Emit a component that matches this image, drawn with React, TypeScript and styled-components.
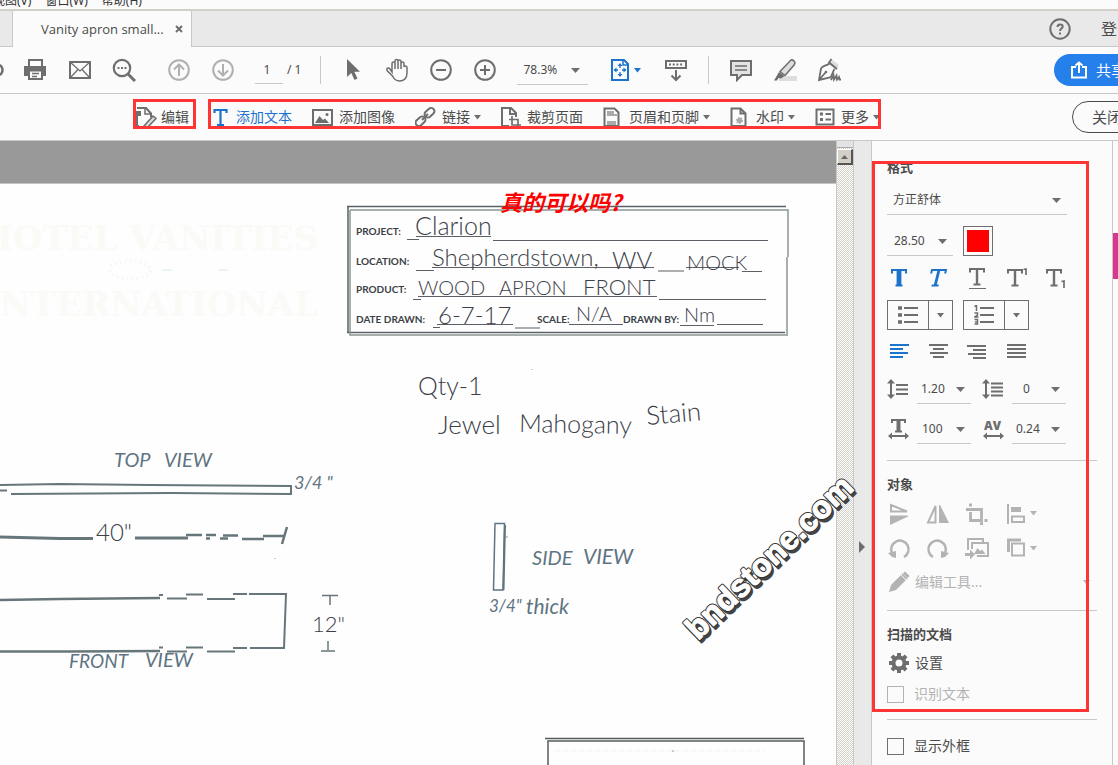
import React from "react";
import styled, { createGlobalStyle } from "styled-components";

const color = {
  ink: "#6e6e6e",
  text: "#4b4b4b",
  blue: "#1b73cc",
  muted: "#b3b3b3",
  line: "#c8c8c8",
  surface: "#fbfbfb",
  shade: "#e9e9e9",
  mark: "#ff3535",
  pencil: "#5f7482",
  pen: "#3c4048",
};

const GlobalStyle = createGlobalStyle`
  *, *::before, *::after { box-sizing: border-box; }
  body {
    margin: 0;
    overflow: hidden;
    background: ${color.surface};
    color: ${color.text};
    font-family: "Noto Sans", "Noto Sans CJK SC", sans-serif;
    font-size: 14px;
    line-height: 20px;
  }
  button, input, select { font: inherit; color: inherit; }
  button { padding: 0; border: 0; background: none; }
  svg { display: block; flex: none; }
`;

const Window = styled.div`
  display: flex;
  flex-direction: column;
  height: 100vh;
  overflow: hidden;
`;

/* ---------- menu and tabs ---------- */

const MenuBar = styled.nav`
  display: flex;
  flex: none;
  align-items: flex-end;
  gap: 14px;
  height: 11px;
  padding-bottom: 1px;
  border-bottom: 2px solid #d0d0c8;
  overflow: hidden;
  white-space: nowrap;
`;

const MenuItem = styled.button<{ $cut?: boolean }>`
  flex: none;
  margin-left: ${(p) => (p.$cut ? "-7px" : "0")};
  font-size: 12px;
  line-height: 14px;
  color: #333;
`;

const TabBar = styled.div`
  display: flex;
  flex: none;
  height: 36px;
  background: ${color.shade};
  border-bottom: 1px solid ${color.line};
`;

const Tab = styled.div`
  display: flex;
  align-items: center;
  gap: 11px;
  height: 36px;
  margin-left: 12px;
  padding: 0 8px 0 28px;
  border: solid ${color.line};
  border-width: 0 1px;
  background: ${color.surface};
  font-family: "Open Sans", sans-serif;
  font-size: 13px;
  white-space: nowrap;
`;

const TabActions = styled.div`
  display: flex;
  align-items: center;
  gap: 29px;
  width: 70px;
  margin-left: auto;
  overflow: hidden;
  white-space: nowrap;
`;

const TextButton = styled.button`
  flex: none;
  font-size: 16px;
`;

/* ---------- toolbars ---------- */

const Toolbar = styled.div`
  display: flex;
  flex: none;
  align-items: center;
  height: 47px;
  border-bottom: 1px solid ${color.line};
  white-space: nowrap;
`;

const ToolCell = styled.button<{ $before?: number }>`
  display: flex;
  flex: none;
  align-items: center;
  justify-content: center;
  gap: 4px;
  width: 44px;
  height: 32px;
  margin-left: ${(p) => p.$before ?? 0}px;
`;

const CutCell = styled(ToolCell)`
  justify-content: flex-start;
  width: 13px;
`;

const ToolDivider = styled.span<{ $before: number; $after: number }>`
  flex: none;
  width: 1px;
  height: 28px;
  margin: 0 ${(p) => p.$after}px 0 ${(p) => p.$before}px;
  background: ${color.line};
`;

const PageField = styled.label`
  display: flex;
  align-items: center;
  gap: 4px;
  margin-left: 10px;
  font-size: 12px;
`;

const PageInput = styled.input`
  width: 28px;
  height: 28px;
  padding: 0 4px 0 0;
  border: 0;
  border-bottom: 1px solid ${color.line};
  background: none;
  text-align: center;
`;

const ZoomSlot = styled.div`
  margin-left: 10px;
`;

const RightSlot = styled.div<{ $width: number }>`
  width: ${(p) => p.$width}px;
  margin-left: auto;
  overflow: hidden;
`;

const ShareButton = styled.button`
  display: flex;
  align-items: center;
  gap: 8px;
  width: 110px;
  height: 32px;
  padding-left: 16px;
  border-radius: 16px;
  background: #2680eb;
  color: #fff;
  font-size: 15px;
`;

const CloseButton = styled.button`
  width: 100px;
  height: 32px;
  padding-left: 19px;
  border: 1px solid #4b4b4b;
  border-radius: 16px;
  font-size: 15px;
  text-align: left;
`;

const Marked = styled.div<{ $before?: number; $gap?: number }>`
  position: relative;
  display: flex;
  align-items: center;
  gap: ${(p) => p.$gap ?? 0}px;
  height: 22px;
  margin-left: ${(p) => p.$before ?? 0}px;
`;

const MarkBox = styled.div<{ $inset: string; $height?: number }>`
  position: absolute;
  inset: ${(p) => p.$inset};
  height: ${(p) => (p.$height ? `${p.$height}px` : "auto")};
  border: 3px solid ${color.mark};
  pointer-events: none;
`;

const EditTool = styled.button<{ $slot?: number; $active?: boolean }>`
  display: grid;
  grid-template-columns: ${(p) => p.$slot ?? 26}px auto auto;
  flex: none;
  align-items: center;
  color: ${(p) => (p.$active ? color.blue : color.text)};
`;

const CaretSvg = styled.svg`
  margin-left: 4px;
`;

/* ---------- workspace ---------- */

const Workspace = styled.main`
  position: relative;
  display: flex;
  flex: 1;
  min-height: 0;
`;

const Viewer = styled.section`
  flex: 1;
  min-width: 0;
  overflow: hidden;
  padding-top: 42px;
  background: #999;
`;

const Sheet = styled.div`
  min-height: 100%;
  border-top: 1px solid #c4c4c4;
  background: #fefefe;
`;

const ScrollBar = styled.div`
  display: flex;
  flex: none;
  flex-direction: column;
  gap: 1px;
  width: 18px;
  border: solid ${color.line};
  border-width: 0 1px;
  background: repeating-conic-gradient(#d4d0c8 0 25%, #fff 0 50%) 0 0 / 2px 2px;
`;

const ScrollSplit = styled.div`
  height: 7px;
  border-bottom: 1px solid #aaa;
  background: #e3e3e3;
`;

const ScrollButton = styled.button`
  display: flex;
  align-items: center;
  justify-content: center;
  height: 16px;
  border: solid;
  border-width: 1px 2px 2px 1px;
  border-color: #fff #555 #555 #fff;
  background: #d4d0c8;
`;

const CollapseStrip = styled.button`
  display: flex;
  flex: none;
  align-items: center;
  width: 18px;
  padding: 187px 0 0 5px;
  border-right: 1px solid ${color.line};
  background: ${color.shade};
`;

const Watermark = styled.svg`
  position: absolute;
  top: 320px;
  right: 250px;
  pointer-events: none;
`;

/* ---------- format panel ---------- */

const Panel = styled.aside`
  position: relative;
  flex: none;
  width: 241px;
  padding: 0 15px;
  border-right: 1px solid ${color.line};
`;

const Gutter = styled.div`
  flex: none;
  width: 5px;
  padding-top: 92px;
`;

const GutterTab = styled.div`
  height: 46px;
  background: #d83790;
`;

const Section = styled.section<{ $top: number; $bottom: number }>`
  padding: ${(p) => p.$top}px 0 ${(p) => p.$bottom}px;
  & + & { border-top: 1px solid ${color.line}; }
`;

const Heading = styled.h2`
  margin: 0;
  font-size: 13px;
  font-weight: 700;
  line-height: 20px;
`;

const Row = styled.div<{ $height: number; $gap?: number }>`
  display: flex;
  align-items: center;
  gap: ${(p) => p.$gap ?? 0}px;
  height: ${(p) => p.$height}px;
`;

const SelectBox = styled.span<{ $width: number }>`
  position: relative;
  display: block;
  flex: none;
  width: ${(p) => p.$width}px;
`;

const SelectField = styled.select<{ $pad: number }>`
  display: block;
  width: 100%;
  height: 30px;
  padding: 0 0 0 ${(p) => p.$pad}px;
  border: 0;
  border-bottom: 1px solid ${color.line};
  border-radius: 0;
  background: none;
  appearance: none;
  font-size: 12px;
`;

const SelectCaret = styled.svg<{ $right: number }>`
  position: absolute;
  top: 13px;
  right: ${(p) => p.$right}px;
  pointer-events: none;
`;

const Swatch = styled.button`
  width: 30px;
  height: 30px;
  margin-left: 10px;
  padding: 3px;
  border: 1px solid ${color.ink};
  background: #f00 content-box;
`;

const IconButton = styled.button`
  display: flex;
  align-items: center;
  gap: 4px;
  width: 39px;
  height: 26px;
`;

const SplitButton = styled.div`
  display: grid;
  grid-template-columns: 40px 1fr;
  width: 66px;
  height: 30px;
  border: 1px solid ${color.ink};
`;

const SplitPart = styled.button`
  display: flex;
  align-items: center;
  justify-content: center;
  & + & { border-left: 1px solid ${color.ink}; }
`;

const Metric = styled.div`
  display: flex;
  align-items: center;
  gap: 7px;
  width: 95px;
`;

const ActionButton = styled.button<{ $muted?: boolean }>`
  display: flex;
  align-items: center;
  gap: 5px;
  width: 100%;
  padding-right: 7px;
  color: ${(p) => (p.$muted ? color.muted : color.text)};
`;

const EndCaret = styled(CaretSvg)`
  margin-left: auto;
`;

const CheckRow = styled.label<{ $muted?: boolean }>`
  display: flex;
  align-items: center;
  gap: 10px;
  color: ${(p) => (p.$muted ? color.muted : color.text)};
`;

const CheckBox = styled.input`
  width: 17px;
  height: 17px;
  margin: 0;
  border: 1px solid ${color.ink};
  appearance: none;
  &:disabled { border-color: ${color.muted}; }
`;

/* ---------- icons ---------- */

type IconProps = { w?: number; h?: number; c?: string; children: React.ReactNode };

const Icon = ({ w = 24, h = 24, c = color.ink, children }: IconProps) => (
  <svg width={w} height={h} viewBox={`0 0 ${w} ${h}`} fill="none" stroke={c} strokeWidth={2} aria-hidden="true">
    {children}
  </svg>
);

const Triangle = ({ c }: { c: string }) => <path d="M0 0h7L3.500 4.500z" fill={c} />;

const Caret = ({ c = color.ink }: { c?: string }) => (
  <CaretSvg width="7" height="5" aria-hidden="true"><Triangle c={c} /></CaretSvg>
);

const BareCaret = ({ c = color.ink }: { c?: string }) => (
  <svg width="7" height="5" aria-hidden="true"><Triangle c={c} /></svg>
);

const PrintIcon = () => (
  <Icon>
    <path d="M6 8V2h13v6" />
    <path d="M1 8h22v10H1z" fill={color.ink} stroke="none" />
    <path d="M6 12.500h13V21H6z" fill={color.surface} />
    <path d="M9 15.500h7M9 18.500h5" strokeWidth="1.300" />
  </Icon>
);
const MailIcon = () => (
  <Icon>
    <path d="M2 4h20v16H2z" />
    <path d="M2 4l10 9L22 4M2 20l8-8.500M22 20l-8-8.500" strokeWidth="1.300" />
  </Icon>
);
const SearchIcon = () => (
  <Icon>
    <circle cx="10" cy="10" r="8.200" strokeWidth="2.200" />
    <path d="M16 16l7 7" strokeWidth="3" />
    <path d="M5.500 10h2M9 10h2M12.500 10h2" />
  </Icon>
);
const ArrowIcon = ({ down }: { down?: boolean }) => (
  <Icon c="#b0b0b0">
    <circle cx="12" cy="12" r="9.800" />
    <path d={down ? "M12 6v11M7 12.500l5 5 5-5" : "M12 18V7M7 11.500l5-5 5 5"} />
  </Icon>
);
const CursorIcon = () => (
  <Icon><path d="M6 1v18l4.300-4 3.200 7 3-1.400-3.200-6.800H19z" fill={color.ink} stroke="none" /></Icon>
);
const HandIcon = () => (
  <Icon>
    <path
      d="M7 14V5.500a1.500 1.500 0 013 0V11V3a1.500 1.500 0 013 0v8V3.500a1.500 1.500 0 013 0V11V5.500a1.500 1.500 0 013 0V9c.3-1.500 3-1.500 3 .5V15c0 5-3 8-7.500 8-4 0-5.500-2-7-5L2 12.500c-1-2 1.500-3.500 3-1.500z"
      strokeWidth="1.500"
    />
  </Icon>
);
const ZoomIcon = ({ plus }: { plus?: boolean }) => (
  <Icon>
    <circle cx="12" cy="12" r="9.800" />
    <path d={plus ? "M7 12h10M12 7v10" : "M7 12h10"} />
  </Icon>
);
const FitIcon = () => (
  <Icon w={20} c={color.blue}>
    <path d="M2 2h12l4 4v16H2z" />
    <path d="M13 2v5h5" strokeWidth="1.500" />
    <path d="M10 7v3M10 14v3M4.500 12H8M12 12h3.500" strokeWidth="1.300" />
    <path d="M10 5l2.500 3h-5zM10 19l2.500-3h-5zM3.500 12l3-2.500v5zM16.500 12l-3-2.500v5z" fill={color.blue} stroke="none" />
  </Icon>
);
const RulerIcon = () => (
  <Icon>
    <path d="M2 3h20v7H2z" />
    <path d="M5 6.500h14" strokeDasharray="2 1.700" strokeWidth="2" />
    <path d="M12 12v10M7.500 17.500l4.500 4.500 4.500-4.500" />
  </Icon>
);
const CommentIcon = () => (
  <Icon>
    <path d="M2 3h20v14h-9l-5 5v-5H2z" fill="#e3e3e3" />
    <path d="M6 8h12M6 12h12" strokeWidth="1.500" />
  </Icon>
);
const HighlightIcon = () => (
  <Icon>
    <path d="M6 18h18v5H6z" fill="#ddd" stroke="none" />
    <path d="M7 13.500L17.500 2.500c1.500-1.500 5.500.5 4 4L12 17.500z" fill="#ddd" strokeWidth="1.500" />
    <path d="M6 14l5.500 4L8 20.500 5.500 20 4 22.500H1z" fill={color.ink} stroke="none" />
  </Icon>
);
const PenIcon = () => (
  <Icon>
    <path d="M14 1l8 6-3 5-7-6z" fill="#ddd" stroke="none" />
    <path d="M14.500 1l-2.500 3.500 8 6.500M12.500 5.500C9 8 5 8 4 10.500L2 22l11-2.500c2-1 2-4.500 4.500-8.500M2 22l6.500-7.500" strokeWidth="1.800" />
    <circle cx="9" cy="14" r="1.300" fill={color.ink} stroke="none" />
    <path d="M14 22l2.500-5 .5 4.500 2.500-4 .5 4 2-2.500.5 2.500h1.500" strokeWidth="1.800" />
  </Icon>
);
const ShareIcon = () => (
  <Icon w={18} h={18} c="#fff">
    <path d="M6 6H2v10.500h14V6h-4M9 12V2M5.500 4.500L9 1.500l3.500 3" />
  </Icon>
);
const HelpIcon = () => (
  <Icon>
    <circle cx="12" cy="12" r="9.700" />
    <path d="M9.500 10c0-3.500 5.200-3.300 5.200-.5 0 2-2.700 2-2.700 4.500M12 15.500v2" strokeWidth="2" />
  </Icon>
);
const CrossIcon = () => (
  <Icon w={8} h={8}><path d="M1 1l6 6M7 1L1 7" /></Icon>
);

const EditPageIcon = () => (
  <Icon w={22} h={22}>
    <path d="M4 20H2V10M2 2h9l5 5.500v4" />
    <path d="M10 2v6h6" strokeWidth="1.500" />
    <path d="M0 5h6v5H0z" fill={color.ink} stroke="none" />
    <path d="M9 20l9-10 3 2.500L12 22z" fill="#ddd" strokeWidth="1.600" />
  </Icon>
);
const TextIcon = () => (
  <Icon w={16} h={20} c={color.blue}>
    <path d="M1.500 6V3h12v3M7.500 3v14.500M4 18h7" strokeWidth="2.200" />
  </Icon>
);
const PictureIcon = () => (
  <Icon w={22} h={20}>
    <path d="M1 3h19v15H1z" />
    <path d="M3 16l4.500-7 3.500 4 2-1.500 4 4.500z" fill={color.ink} stroke="none" />
    <circle cx="15" cy="7.500" r="1.500" fill={color.ink} stroke="none" />
  </Icon>
);
const LinkIcon = () => (
  <Icon w={22} h={22}>
    <rect x="9" y="3.500" width="11" height="6.500" rx="3.200" transform="rotate(-42 14.500 6.700)" />
    <rect x="0" y="12" width="11" height="6.500" rx="3.200" transform="rotate(-42 5.500 15.200)" />
    <path d="M7 14l6-6" />
  </Icon>
);
const CropPageIcon = () => (
  <Icon w={22} h={22}>
    <path d="M8 20H1V2h9l5 5v4M9 2v6h6" />
    <path d="M11 10v9h9M8 13.500h9V22" strokeWidth="1.700" />
  </Icon>
);
const HeaderIcon = () => (
  <Icon w={18} h={20}>
    <path d="M1.500 1.500h10l4 4V19h-14z" />
    <path d="M4 4h7v3h3v2H4zM4 14h9v4H4z" fill="#aaa" stroke="none" />
  </Icon>
);
const WatermarkIcon = () => (
  <Icon w={18} h={20}>
    <path d="M1.500 1.500h9l5 5V19h-14zM10.500 1.500v5h5" />
    <circle cx="9.500" cy="13.500" r="2.500" fill="#aaa" stroke="#aaa" strokeDasharray="1.500 1" />
  </Icon>
);
const MoreIcon = () => (
  <Icon w={20} h={18}>
    <path d="M1.500 1.500h17v15h-17z" />
    <path d="M5 6h3M5 11.500h3" strokeWidth="3" />
    <path d="M10.500 6H16M10.500 11.500H16" />
  </Icon>
);

const SerifT = ({ c, weight = 1.8, x = 0 }: { c: string; weight?: number; x?: number }) => (
  <g stroke={c} transform={`translate(${x} 0)`}>
    <path d="M2 7.500V4h14v3.500" strokeWidth="2" />
    <path d="M9 4v15" strokeWidth={weight * 1.6} />
    <path d="M5.500 19.500h7" strokeWidth="2" />
  </g>
);
const BoldIcon = () => <Icon w={26} c={color.blue}><SerifT c={color.blue} weight={3} x={3} /></Icon>;
const ItalicIcon = () => (
  <Icon w={26} c={color.blue}>
    <g transform="skewX(-14) translate(5 0)"><SerifT c={color.blue} weight={1.8} /></g>
  </Icon>
);
const UnderlineIcon = () => (
  <Icon w={26}><g transform="translate(3 -1)"><SerifT c={color.ink} weight={1.5} /></g><path d="M4 22.500h17" strokeWidth="1" /></Icon>
);
const SuperIcon = () => <Icon w={26}><SerifT c={color.ink} weight={1.5} x={2} /><path d="M19.500 3.500L22 3v6" strokeWidth="1.700" /></Icon>;
const SubIcon = () => <Icon w={26}><SerifT c={color.ink} weight={1.5} x={2} /><path d="M18.500 15.500L21 15v7" strokeWidth="1.700" /></Icon>;

const BulletsIcon = () => (
  <Icon w={20} h={20}>
    <path d="M6 3h14M6 10h14M6 17h14" />
    <path d="M0 3h4M0 10h4M0 17h4" strokeWidth="3.500" />
  </Icon>
);
const NumbersIcon = () => (
  <Icon w={20} h={20}>
    <path d="M6 3h14M6 10h14M6 17h14" />
    <path d="M.5 1.500L2.500.5V6M.5 8h3v2l-3 2h4M.5 14.500h3v4.500h-3M1 17h3" strokeWidth="1.500" />
  </Icon>
);

const AlignIcon = ({ d, c = color.ink }: { d: string; c?: string }) => (
  <Icon w={24} h={18} c={c}><path d={d} /></Icon>
);

const UpDown = () => (
  <>
    <path d="M4 4v14" strokeWidth="2" />
    <path d="M4 1l4 4.500H0zM4 21l4-4.500H0z" fill={color.ink} stroke="none" />
  </>
);
const LineIcon = () => <Icon w={23} h={22}><UpDown /><path d="M9 7h12M9 11.500h12M9 16h12" /></Icon>;
const ParagraphIcon = () => <Icon w={23} h={22}><UpDown /><path d="M9 5.500h12M9 9.500h12M9 13.500h12M9 17.500h12" /></Icon>;
const LeftRight = () => (
  <>
    <path d="M4 19h15" />
    <path d="M1 19l4-3.500v7zM22 19l-4-3.500v7z" fill={color.ink} stroke="none" />
  </>
);
const ScaleIcon = () => (
  <Icon w={23}><path d="M5 6V3h13v3M8 14.500h7" /><path d="M11.500 3v11" strokeWidth="4" /><LeftRight /></Icon>
);
const KerningIcon = () => (
  <Icon w={23}>
    <text x="2" y="13" fontFamily="Open Sans, sans-serif" fontWeight="800" fontSize="12" fill={color.ink} stroke="none">AV</text>
    <LeftRight />
  </Icon>
);

const m = color.muted;
const FlipVIcon = () => (
  <Icon w={24} c={m}><path d="M4 3L20 9.500H4z" strokeWidth="2" /><path d="M3 13.500h18v1L3 23z" fill={m} stroke="none" /></Icon>
);
const FlipHIcon = () => (
  <Icon w={24} c={m}><path d="M9.500 4v16.500H2z" strokeWidth="2" /><path d="M13 3h1l9 18H13z" fill={m} stroke="none" /></Icon>
);
const CropIcon = () => (
  <Icon w={24} c={m}><path d="M1 7.500h15.500V23M5.500 10v8.500H15" strokeWidth="2.800" /><path d="M4 3h3M19.500 18.500h3" strokeWidth="3" /></Icon>
);
const AlignObjIcon = () => (
  <Icon w={22} c={m}><path d="M4 2v20M8 14.500h12v5.500H8z" /><path d="M7 5h10v5H7z" fill={m} stroke="none" /></Icon>
);
const RotateIcon = ({ right }: { right?: boolean }) => (
  <Icon w={24} c={m}>
    <g transform={right ? "translate(24 0) scale(-1 1)" : undefined}>
      <path d="M5 17a8.700 8.700 0 1112 4" strokeWidth="2.500" />
      <path d="M1 17l8-2v7l-4-1z" fill={m} stroke="none" />
    </g>
  </Icon>
);
const ReplaceIcon = () => (
  <Icon w={24} c={m}>
    <path d="M3 14V3h15v3M7 13V7h16v13H12" />
    <path d="M9 18l3.500-6 2.500 3 2-1.500 3.500 4.500z" fill={m} stroke="none" />
    <path d="M0 18.500h6" strokeWidth="3" /><path d="M5 13.500l5 5-5 5z" fill={m} stroke="none" />
  </Icon>
);
const ArrangeIcon = () => (
  <Icon w={22} c={m}><path d="M8 7.500h12v12H8z" /><path d="M4.500 16V4H17" strokeWidth="3" /></Icon>
);
const PencilIcon = () => (
  <Icon w={23} c={m}>
    <path d="M2 22l2-7L15.500 3.500l5 5L9 20z" fill={m} stroke="none" /><path d="M17 2.500l4.500 4.500" strokeWidth="3" />
    <path d="M14 5l5 5" stroke={color.surface} strokeWidth="1" />
  </Icon>
);
const GearIcon = () => (
  <Icon w={23}>
    <circle cx="12" cy="12" r="5.500" strokeWidth="4" />
    {[0, 45, 90, 135].map((a) => (
      <path key={a} d="M12 2v4M12 18v4" strokeWidth="4" transform={`rotate(${a} 12 12)`} />
    ))}
  </Icon>
);

/* ---------- scanned sheet ---------- */

const label = { fontFamily: "Lato, sans-serif", fontWeight: 700, fontSize: 10, fill: "#3b4147" };
const pen = { fontFamily: "Lato, sans-serif", fontWeight: 300, fill: color.pen };
const pencil = { fontFamily: "Lato, sans-serif", fontStyle: "italic", fontWeight: 400, fill: color.pencil };
const letterhead = {
  fontFamily: "DejaVu Serif, serif", fontWeight: 700, fontSize: 34, fill: "#fafaf7", textAnchor: "end" as const,
};

const ScannedSheet = () => (
  <svg width="836" height="581" viewBox="0 184 836 581" fill="none" role="img" aria-label="Vanity apron drawing">
    <text x="318" y="250" {...letterhead}>HOTEL VANITIES</text>
    <text x="318" y="316" {...letterhead}>INTERNATIONAL</text>
    <ellipse cx="130" cy="270" rx="20" ry="9" stroke="#f5f9f7" strokeWidth="4" strokeDasharray="2 3" />
    <path d="M162 270h10M219 270h9" stroke="#d5ebe5" />

    <g stroke="#5b6166">
      <path d="M347 206.500H786M348 206v127M347 332.500H785" strokeWidth="1.500" />
      <path d="M350 210H788V257M787 257V336M350 210V335H786" stroke="#8b9692" strokeWidth="1.500" />
      <path d="M407 239.500h12M416 236.500h75M493 240.500H768" />
      <path d="M416 270.500h18M432 267.500h222M658 271h26M686 267.500h53M742 271.500h20" />
      <path d="M413 299.500h8M418 296.500h239M659 299.500H766" />
      <path d="M433 327.500h7M437 324.500h76M515 328h25M569 324.500h54M680 325.500h34M717 324.500h46" />
    </g>
    <g {...label}>
      <text x="356" y="235">PROJECT:</text>
      <text x="356" y="265">LOCATION:</text>
      <text x="356" y="293">PRODUCT:</text>
      <text x="356" y="323">DATE DRAWN:</text>
      <text x="537" y="323">SCALE:</text>
      <text x="623" y="323">DRAWN BY:</text>
    </g>
    <g {...pen}>
      <text x="415" y="235" fontSize="25">Clarion</text>
      <text x="432" y="266" fontSize="24">Shepherdstown,</text>
      <text x="612" y="269" fontSize="24">WV</text>
      <text x="687" y="270" fontSize="20">MOCK</text>
      <text x="418" y="295" fontSize="20">WOOD</text>
      <text x="499" y="295" fontSize="20">APRON</text>
      <text x="583" y="295" fontSize="22">FRONT</text>
      <text x="438" y="324" fontSize="24">6-7-17</text>
      <text x="576" y="321" fontSize="20">N/A</text>
      <text x="684" y="322" fontSize="20">Nm</text>
      <text x="418" y="395" fontSize="25">Qty-1</text>
      <text x="438" y="434" fontSize="26">Jewel</text>
      <text x="519" y="432" fontSize="25" transform="rotate(1 519 432)">Mahogany</text>
      <text x="647" y="425" fontSize="26" transform="rotate(-5 647 425)">Stain</text>
      <text x="96" y="541" fontSize="24">40"</text>
      <text x="312" y="632" fontSize="22">12"</text>
    </g>
    <text
      x="500" y="211" fontFamily="Noto Sans CJK SC, sans-serif" fontSize="22" fontWeight="700" fontStyle="italic" fill="#f00"
    >
      真的可以吗?
    </text>

    <g {...pencil}>
      <text x="114" y="467" fontSize="20">TOP</text>
      <text x="164" y="467" fontSize="20">VIEW</text>
      <text x="294" y="489" fontSize="18">3/4 "</text>
      <text x="69" y="668" fontSize="19">FRONT</text>
      <text x="145" y="667" fontSize="20">VIEW</text>
      <text x="532" y="565" fontSize="20">SIDE</text>
      <text x="583" y="564" fontSize="21">VIEW</text>
      <text x="489" y="612" fontSize="17">3/4"</text>
      <text x="526" y="614" fontSize="21">thick</text>
    </g>

    <g stroke="#67767a" strokeWidth="2">
      <path d="M0 485l60-1 90 1 141 1v8l-120-1-160 1" />
      <path d="M0 490.500h7" />
      <path d="M0 537l60 1.500h33M135 538h53" strokeWidth="3" />
      <path d="M186 535h16M206 535h10M206 538.500h4M220 538.500h8M223 535.500h15M242 539h22M263 536h21M287 527l-5 17" strokeWidth="2.500" />
      <path d="M0 600l60-1 100-1M0 651.500h70l90-.5" strokeWidth="2.500" />
      <path d="M159 595h4M167 598.500h20M186 594.500h17M207 599h28M233 594h14M249 594h37l-2 54h-34" />
      <path d="M159 647.500h4M167 651.500h20M186 647.500h17M207 651.500h28M233 648h14" />
      <path d="M322 595.500h16M330 596v9M328 641v9M321 651h14" strokeWidth="1.500" />
      <path d="M495 523.500h9.500L503 590h-9.500z" stroke={color.pencil} strokeWidth="1.500" />
      <path d="M505 525l-1.500 65" stroke={color.pencil} />
    </g>
    <path d="M545 738.500h259M548 765v-24h256v24" stroke="#555c5c" strokeWidth="1.500" />
    <path d="M555 751h210" stroke="#f9f9f7" strokeWidth="3" strokeDasharray="5 3" />
    <path d="M507 536v2M532 369v1M275 558v1M672 751h2" stroke="#999" />
  </svg>
);

/* ---------- page ---------- */

type SelectProps = { name: string; value: string; width: number; pad: number; right?: number };

const PanelSelect = ({ name, value, width, pad, right = 6 }: SelectProps) => (
  <SelectBox $width={width}>
    <SelectField aria-label={name} $pad={pad} defaultValue={value}>
      <option>{value}</option>
    </SelectField>
    <SelectCaret $right={right} width="9" height="5" viewBox="-1 0 9 5" aria-hidden="true">
      <path d="M-1 0h9L3.500 5z" fill={color.ink} />
    </SelectCaret>
  </SelectBox>
);

const insertTools = [
  { name: "添加文本", icon: <TextIcon />, slot: 23, active: true },
  { name: "添加图像", icon: <PictureIcon />, slot: 27 },
  { name: "链接", icon: <LinkIcon />, slot: 27, menu: true },
  { name: "裁剪页面", icon: <CropPageIcon /> },
  { name: "页眉和页脚", icon: <HeaderIcon />, menu: true },
  { name: "水印", icon: <WatermarkIcon />, menu: true },
  { name: "更多", icon: <MoreIcon />, menu: true },
];

export default function App() {
  return (
    <>
      <GlobalStyle />
      <Window>
        <MenuBar>
          <MenuItem $cut>视图(V)</MenuItem>
          <MenuItem>窗口(W)</MenuItem>
          <MenuItem>帮助(H)</MenuItem>
        </MenuBar>

        <TabBar>
          <Tab>
            Vanity apron small...
            <button aria-label="关闭标签"><CrossIcon /></button>
          </Tab>
          <TabActions>
            <button aria-label="帮助"><HelpIcon /></button>
            <TextButton>登录</TextButton>
          </TabActions>
        </TabBar>

        <Toolbar>
          <CutCell aria-label="保存">
            <Icon w={4} h={14}><path d="M-2 2c6 0 6 10 0 10" strokeWidth="2.500" /></Icon>
          </CutCell>
          <ToolCell aria-label="打印"><PrintIcon /></ToolCell>
          <ToolCell aria-label="邮件" $before={1}><MailIcon /></ToolCell>
          <ToolCell aria-label="搜索"><SearchIcon /></ToolCell>
          <ToolCell aria-label="上一页" $before={11}><ArrowIcon /></ToolCell>
          <ToolCell aria-label="下一页"><ArrowIcon down /></ToolCell>
          <PageField>
            <PageInput aria-label="页码" defaultValue="1" />
            / 1
          </PageField>
          <ToolDivider $before={19} $after={10} />
          <ToolCell aria-label="选择"><CursorIcon /></ToolCell>
          <ToolCell aria-label="抓手"><HandIcon /></ToolCell>
          <ToolCell aria-label="缩小"><ZoomIcon /></ToolCell>
          <ToolCell aria-label="放大"><ZoomIcon plus /></ToolCell>
          <ZoomSlot>
            <PanelSelect name="缩放" value="78.3%" width={71} pad={6} right={8} />
          </ZoomSlot>
          <ToolCell aria-label="适合页面" $before={15}><FitIcon /><BareCaret c={color.blue} /></ToolCell>
          <ToolCell aria-label="显示工具栏" $before={7}><RulerIcon /></ToolCell>
          <ToolDivider $before={10} $after={10} />
          <ToolCell aria-label="注释"><CommentIcon /></ToolCell>
          <ToolCell aria-label="高亮"><HighlightIcon /></ToolCell>
          <ToolCell aria-label="签名"><PenIcon /></ToolCell>
          <RightSlot $width={64}>
            <ShareButton><ShareIcon />共享</ShareButton>
          </RightSlot>
        </Toolbar>

        <Toolbar>
          <Marked $before={135}>
            <EditTool><EditPageIcon />编辑</EditTool>
            <MarkBox $inset="-7px -7px -1px -2px" />
          </Marked>
          <Marked $before={24} $gap={20}>
            {insertTools.map((t) => (
              <EditTool key={t.name} $slot={t.slot} $active={t.active}>
                {t.icon}
                {t.name}
                {t.menu && <Caret />}
              </EditTool>
            ))}
            <MarkBox $inset="-7px -1px -1px -5px" />
          </Marked>
          <RightSlot $width={46}>
            <CloseButton>关闭</CloseButton>
          </RightSlot>
        </Toolbar>

        <Workspace>
          <Viewer>
            <Sheet><ScannedSheet /></Sheet>
          </Viewer>
          <ScrollBar>
            <ScrollSplit />
            <ScrollButton aria-label="向上滚动">
              <svg width="7" height="4" aria-hidden="true"><path d="M0 4h7L3.500 0z" fill="#666" /></svg>
            </ScrollButton>
          </ScrollBar>
          <CollapseStrip aria-label="折叠面板">
            <svg width="7" height="12" aria-hidden="true"><path d="M0 0v12l6-6z" fill={color.ink} /></svg>
          </CollapseStrip>

          <Panel>
            <Section $top={16} $bottom={11}>
              <Heading>格式</Heading>
              <Row $height={46}>
                <PanelSelect name="字体" value="方正舒体" width={180} pad={6} />
              </Row>
              <Row $height={36}>
                <PanelSelect name="字号" value="28.50" width={66} pad={7} />
                <Swatch aria-label="文本颜色" />
              </Row>
              <Row $height={38}>
                <IconButton aria-label="粗体"><BoldIcon /></IconButton>
                <IconButton aria-label="斜体"><ItalicIcon /></IconButton>
                <IconButton aria-label="下划线"><UnderlineIcon /></IconButton>
                <IconButton aria-label="上标"><SuperIcon /></IconButton>
                <IconButton aria-label="下标"><SubIcon /></IconButton>
              </Row>
              <Row $height={36} $gap={10}>
                <SplitButton>
                  <SplitPart aria-label="项目符号"><BulletsIcon /></SplitPart>
                  <SplitPart aria-label="项目符号选项"><BareCaret /></SplitPart>
                </SplitButton>
                <SplitButton>
                  <SplitPart aria-label="编号"><NumbersIcon /></SplitPart>
                  <SplitPart aria-label="编号选项"><BareCaret /></SplitPart>
                </SplitButton>
              </Row>
              <Row $height={36}>
                <IconButton aria-label="左对齐"><AlignIcon c={color.blue} d="M3 3h19M3 7h13M3 11h18M3 15h13" /></IconButton>
                <IconButton aria-label="居中"><AlignIcon d="M3 3h19M7 7h11M4 11h18M7 15h11" /></IconButton>
                <IconButton aria-label="右对齐"><AlignIcon d="M2 4h19M8 8h13M3 12h18M8 16h13" /></IconButton>
                <IconButton aria-label="两端对齐"><AlignIcon d="M3 3h19M3 7h19M3 11h19M3 15h19" /></IconButton>
              </Row>
              <Row $height={40}>
                <Metric><LineIcon /><PanelSelect name="行距" value="1.20" width={54} pad={4} /></Metric>
                <Metric><ParagraphIcon /><PanelSelect name="段落间距" value="0" width={54} pad={11} /></Metric>
              </Row>
              <Row $height={40}>
                <Metric><ScaleIcon /><PanelSelect name="水平缩放" value="100" width={54} pad={5} /></Metric>
                <Metric><KerningIcon /><PanelSelect name="字符间距" value="0.24" width={54} pad={4} /></Metric>
              </Row>
            </Section>

            <Section $top={13} $bottom={9}>
              <Heading>对象</Heading>
              <Row $height={39}>
                <IconButton aria-label="垂直翻转"><FlipVIcon /></IconButton>
                <IconButton aria-label="水平翻转"><FlipHIcon /></IconButton>
                <IconButton aria-label="裁剪"><CropIcon /></IconButton>
                <IconButton aria-label="对齐对象"><AlignObjIcon /><BareCaret c={m} /></IconButton>
              </Row>
              <Row $height={30}>
                <IconButton aria-label="逆时针旋转"><RotateIcon /></IconButton>
                <IconButton aria-label="顺时针旋转"><RotateIcon right /></IconButton>
                <IconButton aria-label="替换图像"><ReplaceIcon /></IconButton>
                <IconButton aria-label="排列对象"><ArrangeIcon /><BareCaret c={m} /></IconButton>
              </Row>
              <Row $height={38}>
                <ActionButton $muted>
                  <PencilIcon />编辑工具...
                  <EndCaret width="7" height="5" aria-hidden="true"><Triangle c={m} /></EndCaret>
                </ActionButton>
              </Row>
            </Section>

            <Section $top={13} $bottom={13}>
              <Heading>扫描的文档</Heading>
              <Row $height={38}>
                <ActionButton><GearIcon />设置</ActionButton>
              </Row>
              <Row $height={24}>
                <CheckRow $muted><CheckBox type="checkbox" disabled />识别文本</CheckRow>
              </Row>
            </Section>

            <Section $top={11} $bottom={0}>
              <Row $height={30}>
                <CheckRow><CheckBox type="checkbox" />显示外框</CheckRow>
              </Row>
            </Section>
            <MarkBox $inset="20px 23px auto 0" $height={551} />
          </Panel>
          <Gutter><GutterTab /></Gutter>

          <Watermark width="190" height="190" viewBox="0 0 190 190" aria-label="bndstone.com">
            <g fontFamily="Liberation Sans, sans-serif" fontWeight="700" fontSize="32" strokeLinejoin="round">
              <text transform="translate(22 183) rotate(-44)" fill="#444" stroke="#444" strokeWidth="2">bndstone.com</text>
              <text transform="translate(20 180) rotate(-44)" fill="#fff" stroke="#333" strokeWidth="3">bndstone.com</text>
              <text transform="translate(20 180) rotate(-44)" fill="#fff" stroke="#fff" strokeWidth="1">bndstone.com</text>
            </g>
          </Watermark>
        </Workspace>
      </Window>
    </>
  );
}
